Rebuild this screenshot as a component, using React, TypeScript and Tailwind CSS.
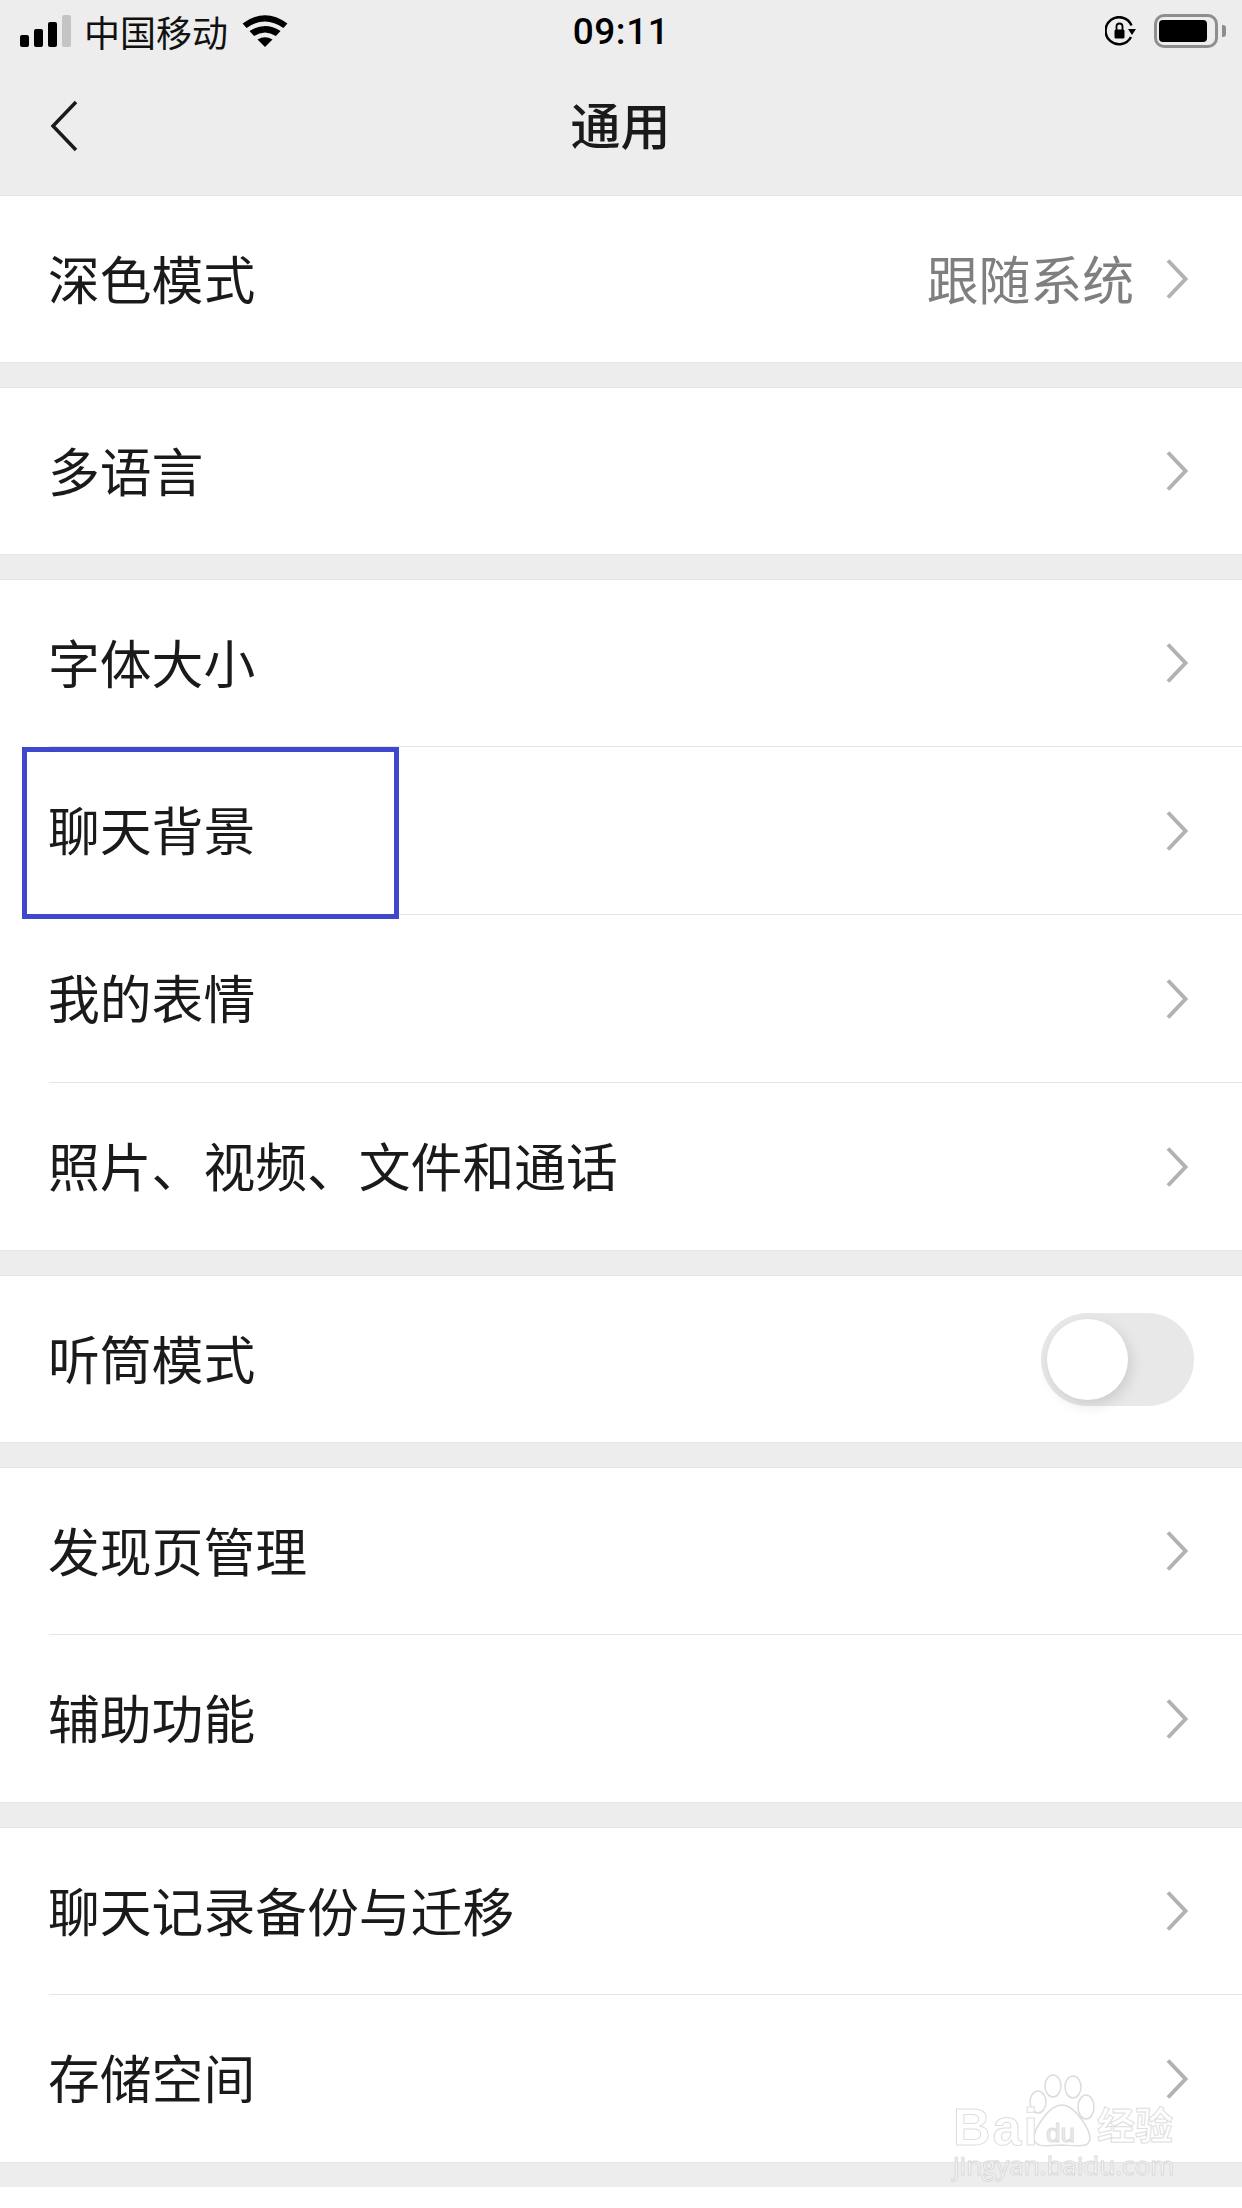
const cjk = "font-['Noto_Sans_CJK_SC','Noto_Sans',sans-serif]";

type Item = { label: string; value?: string; toggle?: boolean; highlight?: boolean };

const sections: Item[][] = [
  [{ label: "深色模式", value: "跟随系统" }],
  [{ label: "多语言" }],
  [
    { label: "字体大小" },
    { label: "聊天背景", highlight: true },
    { label: "我的表情" },
    { label: "照片、视频、文件和通话" },
  ],
  [{ label: "听筒模式", toggle: true }],
  [{ label: "发现页管理" }, { label: "辅助功能" }],
  [{ label: "聊天记录备份与迁移" }, { label: "存储空间" }],
];

function Chevron() {
  return (
    <svg width="24" height="42" viewBox="0 0 24 42" fill="none" className="shrink-0">
      <path d="M3 2.5 L20.5 21 L3 39.5" stroke="#b2b2b2" strokeWidth="4" />
    </svg>
  );
}

function StatusBar() {
  return (
    <div className="grid h-[62px] grid-cols-[1fr_auto_1fr] items-center px-[18px]">
      <div className="ml-[2px] flex items-center">
        <div className="flex items-end gap-[5px]">
          <span className="h-[12px] w-[9px] rounded-[2px] bg-black" />
          <span className="h-[18px] w-[9px] rounded-[2px] bg-black" />
          <span className="h-[25px] w-[9px] rounded-[2px] bg-black" />
          <span className="h-[32px] w-[9px] rounded-[2px] bg-[#c4c4c4]" />
        </div>
        <span className={`ml-[13px] text-[36px] leading-none text-[#111] ${cjk}`}>中国移动</span>
        <svg width="46" height="34" viewBox="0 0 40 34" preserveAspectRatio="none" className="ml-[14px] -mt-[3px]">
          <path d="M20 34 L13.5 26.5 Q20 22 26.5 26.5 Z" fill="#000" />
          <path d="M10.5 23 L6.5 18 Q20 8 33.5 18 L29.5 23 Q20 16 10.5 23 Z" fill="#000" />
          <path d="M4 15 L0.5 10.5 Q20 -6 39.5 10.5 L36 15 Q20 2 4 15 Z" fill="#000" />
        </svg>
      </div>
      <span className="font-['Roboto',sans-serif] text-[37px] leading-none font-medium tracking-[0.5px] text-black">
        09:11
      </span>
      <div className="-mr-[2px] flex items-center justify-end gap-[17px]">
        <svg width="32" height="30" viewBox="0 0 32 30" fill="none">
          <path d="M26.5 9.5 A13.5 13.5 0 1 0 26 21" stroke="#000" strokeWidth="2.5" />
          <path d="M23 13 L31 13 L27 19 Z" fill="#000" />
          <rect x="9.5" y="13.5" width="10" height="9" rx="1.5" fill="#000" />
          <path d="M11.5 14 V10.5 A3 3 0 0 1 17.5 10.5 V14" stroke="#000" strokeWidth="1.8" />
        </svg>
        <div className="flex items-center gap-[4px]">
          <div className="flex h-[34px] w-[64px] rounded-[10px] border-[3px] border-[#8e8e8e] py-[3px] pr-[8px] pl-[2px]">
            <div className="flex-1 rounded-[4px] bg-black" />
          </div>
          <div className="h-[12px] w-[4px] rounded-r-[3px] bg-[#8e8e8e]" />
        </div>
      </div>
    </div>
  );
}

function Toggle() {
  return (
    <div className="mr-[-5px] flex h-[93px] w-[153px] shrink-0 items-center rounded-full bg-[#e8e8e8] pl-[6px]">
      <div className="h-[81px] w-[81px] rounded-full bg-white shadow-[3px_5px_14px_rgba(0,0,0,0.12)]" />
    </div>
  );
}

function Row({ item, index, total }: { item: Item; index: number; total: number }) {
  const last = index === total - 1;
  const height = total === 1 ? "h-[166px]" : index === 0 || last ? "h-[167px]" : "h-[168px]";
  return (
    <div className={`relative flex items-center pl-[49px] ${height}`}>
      <div
        className={`flex h-full flex-1 items-center pr-[53px] ${last ? "" : "border-b border-[#e5e5e5]"}`}
      >
        <span className={`-ml-[1px] flex-1 pb-[3px] text-[51.8px] leading-none text-[#1a1a1a] ${cjk}`}>
          {item.label}
        </span>
        {item.value && (
          <span className={`mr-[31px] pb-[3px] text-[51.8px] leading-none text-[#7f7f7f] ${cjk}`}>{item.value}</span>
        )}
        {item.toggle ? <Toggle /> : <Chevron />}
      </div>
      {item.highlight && (
        <div className="absolute top-0 left-[22px] h-[172px] w-[377px] border-[5px] border-[#3f48cc]" />
      )}
    </div>
  );
}

function Watermark() {
  return (
    <div className="absolute top-[2070px] left-[950px] h-[115px] w-[230px] font-['Liberation_Sans',sans-serif]">
      <svg width="230" height="85" viewBox="0 0 230 85" className="absolute top-0 left-0" fill="#fff" stroke="#dcdcdc" strokeWidth="1.5">
        <ellipse cx="103" cy="16" rx="8" ry="11" />
        <ellipse cx="123" cy="17" rx="8" ry="11" />
        <ellipse cx="88" cy="32" rx="8" ry="11" />
        <ellipse cx="136" cy="37" rx="8" ry="12" />
        <path d="M112 35 C125 35 140 60 140 68 C140 78 130 76 112 75 C96 76 84 78 84 68 C84 60 98 35 112 35 Z" />
      </svg>
      <span className="absolute top-[35px] left-[3px] text-[52px] leading-[44px] font-bold tracking-[2px] text-white [-webkit-text-stroke:1px_#dedede]">
        Bai
      </span>
      <span className="absolute top-[50px] left-[96px] text-[26px] leading-none text-[#eeeeee] [-webkit-text-stroke:1px_#dcdcdc]">
        du
      </span>
      <span className={`absolute top-[34px] left-[147px] text-[38px] leading-none font-bold text-white [-webkit-text-stroke:1px_#dedede] ${cjk}`}>
        经验
      </span>
      <span className="absolute top-[82px] left-[3px] font-['Open_Sans',sans-serif] text-[26px] leading-none text-white [-webkit-text-stroke:1px_#d8d8d8]">
        jingyan.baidu.com
      </span>
    </div>
  );
}

export default function App() {
  return (
    <div className="relative h-[2208px] w-[1242px] overflow-hidden bg-[#ededed]">
      <StatusBar />
      <div className="grid h-[133px] grid-cols-[1fr_auto_1fr] items-center pb-[5px]">
        <svg width="30" height="52" viewBox="0 0 30 52" fill="none" className="ml-[49px]">
          <path d="M27 2 L4 26 L27 50" stroke="#1a1a1a" strokeWidth="3.5" />
        </svg>
        <span className={`-mt-[7px] -ml-[1px] text-[50px] leading-none font-medium text-[#1a1a1a] ${cjk}`}>通用</span>
        <div />
      </div>
      <div className="flex flex-col gap-[24px]">
        {sections.map((rows, i) => (
          <div key={i} className="border-y border-[#e5e5e5] bg-white">
            {rows.map((item, j) => (
              <Row key={item.label} item={item} index={j} total={rows.length} />
            ))}
          </div>
        ))}
        <div className="h-[30px] bg-white" />
      </div>
      <Watermark />
    </div>
  );
}
